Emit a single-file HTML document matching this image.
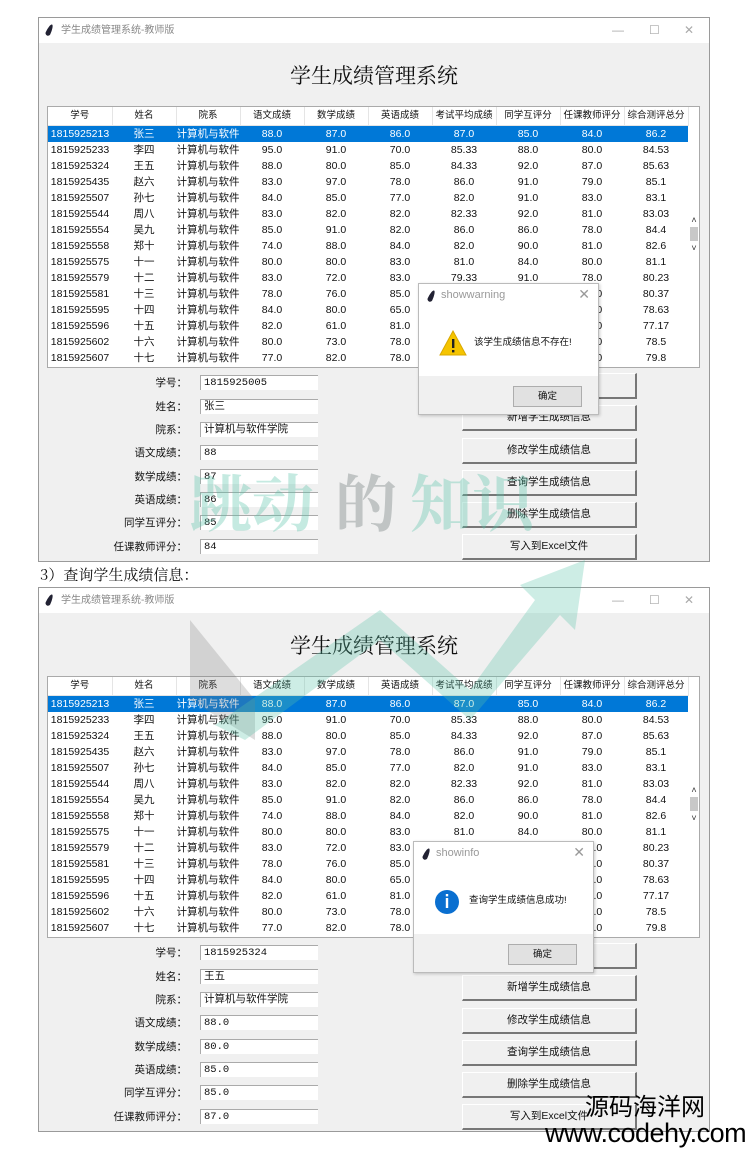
<!DOCTYPE html>
<html><head><meta charset="utf-8">
<style>
*{margin:0;padding:0;box-sizing:border-box}
body{width:750px;height:1152px;background:#fff;position:relative;overflow:hidden;font-family:"Liberation Sans","Noto Sans CJK SC",sans-serif;color:#111}
.win{position:absolute;left:38px;width:672px;height:545px;background:#f0f0f0;border:1px solid #9a9a9a}
.tb{position:absolute;left:0;top:0;width:100%;height:25px;background:#fff;font-size:10px;color:#888;line-height:25px;padding-left:22px}
.feather{position:absolute;left:8px;top:6px;width:5px;height:12px;background:#223;border-radius:50% 50% 50% 50%/80% 80% 20% 20%;transform:rotate(25deg)}
.ctl{position:absolute;top:0;font-size:12px;color:#aaa;line-height:25px}
.title{position:absolute;left:0;width:100%;top:42px;text-align:center;font-family:"Noto Serif CJK SC","Liberation Serif",serif;font-size:21px;color:#111}
.tbl{position:absolute;left:8px;top:88px;width:653px;height:262px;background:#fff;border:1px solid #aaa;overflow:hidden}
table{border-collapse:collapse;table-layout:fixed;width:640px;font-size:10.5px}
td,th{width:64px;text-align:center;height:16px;padding:0;white-space:nowrap;font-weight:normal;line-height:16px}
th{height:18px;border-right:1px solid #e5e5e5;border-bottom:1px solid #e5e5e5;font-size:9.5px}
tr.sel td{background:#0078d7;color:#fff}
.sb{position:absolute;left:649px;top:196px;width:12px;font-size:9px;color:#333;text-align:center;line-height:12px}
.sb i{display:block;width:8px;height:14px;background:#c8c8c8;margin:1px auto}
.lab{position:absolute;right:522px;font-size:10.5px;width:120px;text-align:right}
.inp{position:absolute;left:161px;width:118px;height:15px;background:#fff;border-top:1px solid #aaa;border-left:1px solid #aaa;font-family:"Liberation Mono","Noto Sans CJK SC",monospace;font-size:10.5px;line-height:14px;padding-left:3px}
.btn{position:absolute;left:423px;width:175px;height:26px;background:#f0f0f0;border-top:1px solid #fff;border-left:1px solid #fff;border-right:2px solid #777;border-bottom:2px solid #777;font-size:10.5px;text-align:center;line-height:23px}
.dlg{position:absolute;width:181px;height:132px;background:#fff;border:1px solid #bbb;box-shadow:1px 1px 3px rgba(0,0,0,.2)}
.dlg .t{position:absolute;left:22px;top:5px;font-size:11px;color:#999}
.dlg .x{position:absolute;right:8px;top:2px;font-size:14px;color:#999}
.dlg .m{position:absolute;left:55px;top:50px;font-size:9.5px}
.dlg .f{position:absolute;left:0;bottom:0;width:100%;height:38px;background:#f0f0f0}
.dlg .ok{position:absolute;left:94px;top:10px;width:69px;height:21px;background:#e1e1e1;border:1px solid #adadad;font-size:9.5px;text-align:center;line-height:19px}
.cap{position:absolute;left:40px;top:564px;font-family:"Noto Serif CJK SC","Liberation Serif",serif;font-size:15px}
.wm{position:absolute;font-family:"Noto Serif CJK SC",serif;font-size:62px;font-weight:bold;color:rgba(90,195,170,.35)}
</style></head><body>

<!-- WINDOW 1 -->
<div class="win" style="top:17px">
<div class="tb"><span class="feather"></span>学生成绩管理系统-教师版</div>
<div class="ctl" style="left:573px">—</div><div class="ctl" style="left:610px">☐</div><div class="ctl" style="left:645px">✕</div>
<div class="title">学生成绩管理系统</div>
<div class="tbl"><table>
<tr><th>学号</th><th>姓名</th><th>院系</th><th>语文成绩</th><th>数学成绩</th><th>英语成绩</th><th>考试平均成绩</th><th>同学互评分</th><th>任课教师评分</th><th>综合测评总分</th></tr>
<tr class="sel"><td>1815925213</td><td>张三</td><td>计算机与软件</td><td>88.0</td><td>87.0</td><td>86.0</td><td>87.0</td><td>85.0</td><td>84.0</td><td>86.2</td></tr>
<tr><td>1815925233</td><td>李四</td><td>计算机与软件</td><td>95.0</td><td>91.0</td><td>70.0</td><td>85.33</td><td>88.0</td><td>80.0</td><td>84.53</td></tr>
<tr><td>1815925324</td><td>王五</td><td>计算机与软件</td><td>88.0</td><td>80.0</td><td>85.0</td><td>84.33</td><td>92.0</td><td>87.0</td><td>85.63</td></tr>
<tr><td>1815925435</td><td>赵六</td><td>计算机与软件</td><td>83.0</td><td>97.0</td><td>78.0</td><td>86.0</td><td>91.0</td><td>79.0</td><td>85.1</td></tr>
<tr><td>1815925507</td><td>孙七</td><td>计算机与软件</td><td>84.0</td><td>85.0</td><td>77.0</td><td>82.0</td><td>91.0</td><td>83.0</td><td>83.1</td></tr>
<tr><td>1815925544</td><td>周八</td><td>计算机与软件</td><td>83.0</td><td>82.0</td><td>82.0</td><td>82.33</td><td>92.0</td><td>81.0</td><td>83.03</td></tr>
<tr><td>1815925554</td><td>吴九</td><td>计算机与软件</td><td>85.0</td><td>91.0</td><td>82.0</td><td>86.0</td><td>86.0</td><td>78.0</td><td>84.4</td></tr>
<tr><td>1815925558</td><td>郑十</td><td>计算机与软件</td><td>74.0</td><td>88.0</td><td>84.0</td><td>82.0</td><td>90.0</td><td>81.0</td><td>82.6</td></tr>
<tr><td>1815925575</td><td>十一</td><td>计算机与软件</td><td>80.0</td><td>80.0</td><td>83.0</td><td>81.0</td><td>84.0</td><td>80.0</td><td>81.1</td></tr>
<tr><td>1815925579</td><td>十二</td><td>计算机与软件</td><td>83.0</td><td>72.0</td><td>83.0</td><td>79.33</td><td>91.0</td><td>78.0</td><td>80.23</td></tr>
<tr><td>1815925581</td><td>十三</td><td>计算机与软件</td><td>78.0</td><td>76.0</td><td>85.0</td><td>79.67</td><td>88.0</td><td>80.0</td><td>80.37</td></tr>
<tr><td>1815925595</td><td>十四</td><td>计算机与软件</td><td>84.0</td><td>80.0</td><td>65.0</td><td>76.33</td><td>85.0</td><td>80.0</td><td>78.63</td></tr>
<tr><td>1815925596</td><td>十五</td><td>计算机与软件</td><td>82.0</td><td>61.0</td><td>81.0</td><td>74.67</td><td>85.0</td><td>80.0</td><td>77.17</td></tr>
<tr><td>1815925602</td><td>十六</td><td>计算机与软件</td><td>80.0</td><td>73.0</td><td>78.0</td><td>77.0</td><td>83.0</td><td>80.0</td><td>78.5</td></tr>
<tr><td>1815925607</td><td>十七</td><td>计算机与软件</td><td>77.0</td><td>82.0</td><td>78.0</td><td>79.0</td><td>82.0</td><td>80.0</td><td>79.8</td></tr>
</table></div>
<div class="sb">˄<i></i>˅</div>
<div class="lab" style="top:357px">学号：</div><div class="inp" style="top:357px">1815925005</div>
<div class="lab" style="top:381px">姓名：</div><div class="inp" style="top:381px">张三</div>
<div class="lab" style="top:404px">院系：</div><div class="inp" style="top:404px">计算机与软件学院</div>
<div class="lab" style="top:427px">语文成绩：</div><div class="inp" style="top:427px">88</div>
<div class="lab" style="top:451px">数学成绩：</div><div class="inp" style="top:451px">87</div>
<div class="lab" style="top:474px">英语成绩：</div><div class="inp" style="top:474px">86</div>
<div class="lab" style="top:497px">同学互评分：</div><div class="inp" style="top:497px">85</div>
<div class="lab" style="top:521px">任课教师评分：</div><div class="inp" style="top:521px">84</div>
<div class="btn" style="top:355px"></div>
<div class="btn" style="top:387px">新增学生成绩信息</div>
<div class="btn" style="top:420px">修改学生成绩信息</div>
<div class="btn" style="top:452px">查询学生成绩信息</div>
<div class="btn" style="top:484px">删除学生成绩信息</div>
<div class="btn" style="top:516px">写入到Excel文件</div>
</div>

<div class="dlg" style="left:418px;top:283px">
<span class="feather" style="position:absolute;left:10px;top:6px"></span>
<div class="t">showwarning</div><div class="x">✕</div>
<svg style="position:absolute;left:20px;top:46px" width="28" height="26"><polygon points="14,1 27,25 1,25" fill="#f5c400" stroke="#d9a800"/><rect x="13" y="9" width="2.4" height="9" fill="#222"/><rect x="13" y="20" width="2.4" height="2.4" fill="#222"/></svg>
<div class="m">该学生成绩信息不存在!</div>
<div class="f"><div class="ok">确定</div></div>
</div>

<div class="cap">3）查询学生成绩信息：</div>

<!-- WINDOW 2 -->
<div class="win" style="top:587px">
<div class="tb"><span class="feather"></span>学生成绩管理系统-教师版</div>
<div class="ctl" style="left:573px">—</div><div class="ctl" style="left:610px">☐</div><div class="ctl" style="left:645px">✕</div>
<div class="title">学生成绩管理系统</div>
<div class="tbl"><table>
<tr><th>学号</th><th>姓名</th><th>院系</th><th>语文成绩</th><th>数学成绩</th><th>英语成绩</th><th>考试平均成绩</th><th>同学互评分</th><th>任课教师评分</th><th>综合测评总分</th></tr>
<tr class="sel"><td>1815925213</td><td>张三</td><td>计算机与软件</td><td>88.0</td><td>87.0</td><td>86.0</td><td>87.0</td><td>85.0</td><td>84.0</td><td>86.2</td></tr>
<tr><td>1815925233</td><td>李四</td><td>计算机与软件</td><td>95.0</td><td>91.0</td><td>70.0</td><td>85.33</td><td>88.0</td><td>80.0</td><td>84.53</td></tr>
<tr><td>1815925324</td><td>王五</td><td>计算机与软件</td><td>88.0</td><td>80.0</td><td>85.0</td><td>84.33</td><td>92.0</td><td>87.0</td><td>85.63</td></tr>
<tr><td>1815925435</td><td>赵六</td><td>计算机与软件</td><td>83.0</td><td>97.0</td><td>78.0</td><td>86.0</td><td>91.0</td><td>79.0</td><td>85.1</td></tr>
<tr><td>1815925507</td><td>孙七</td><td>计算机与软件</td><td>84.0</td><td>85.0</td><td>77.0</td><td>82.0</td><td>91.0</td><td>83.0</td><td>83.1</td></tr>
<tr><td>1815925544</td><td>周八</td><td>计算机与软件</td><td>83.0</td><td>82.0</td><td>82.0</td><td>82.33</td><td>92.0</td><td>81.0</td><td>83.03</td></tr>
<tr><td>1815925554</td><td>吴九</td><td>计算机与软件</td><td>85.0</td><td>91.0</td><td>82.0</td><td>86.0</td><td>86.0</td><td>78.0</td><td>84.4</td></tr>
<tr><td>1815925558</td><td>郑十</td><td>计算机与软件</td><td>74.0</td><td>88.0</td><td>84.0</td><td>82.0</td><td>90.0</td><td>81.0</td><td>82.6</td></tr>
<tr><td>1815925575</td><td>十一</td><td>计算机与软件</td><td>80.0</td><td>80.0</td><td>83.0</td><td>81.0</td><td>84.0</td><td>80.0</td><td>81.1</td></tr>
<tr><td>1815925579</td><td>十二</td><td>计算机与软件</td><td>83.0</td><td>72.0</td><td>83.0</td><td>79.33</td><td>91.0</td><td>78.0</td><td>80.23</td></tr>
<tr><td>1815925581</td><td>十三</td><td>计算机与软件</td><td>78.0</td><td>76.0</td><td>85.0</td><td>79.67</td><td>88.0</td><td>80.0</td><td>80.37</td></tr>
<tr><td>1815925595</td><td>十四</td><td>计算机与软件</td><td>84.0</td><td>80.0</td><td>65.0</td><td>76.33</td><td>85.0</td><td>80.0</td><td>78.63</td></tr>
<tr><td>1815925596</td><td>十五</td><td>计算机与软件</td><td>82.0</td><td>61.0</td><td>81.0</td><td>74.67</td><td>85.0</td><td>80.0</td><td>77.17</td></tr>
<tr><td>1815925602</td><td>十六</td><td>计算机与软件</td><td>80.0</td><td>73.0</td><td>78.0</td><td>77.0</td><td>83.0</td><td>80.0</td><td>78.5</td></tr>
<tr><td>1815925607</td><td>十七</td><td>计算机与软件</td><td>77.0</td><td>82.0</td><td>78.0</td><td>79.0</td><td>82.0</td><td>80.0</td><td>79.8</td></tr>
</table></div>
<div class="sb">˄<i></i>˅</div>
<div class="lab" style="top:357px">学号：</div><div class="inp" style="top:357px">1815925324</div>
<div class="lab" style="top:381px">姓名：</div><div class="inp" style="top:381px">王五</div>
<div class="lab" style="top:404px">院系：</div><div class="inp" style="top:404px">计算机与软件学院</div>
<div class="lab" style="top:427px">语文成绩：</div><div class="inp" style="top:427px">88.0</div>
<div class="lab" style="top:451px">数学成绩：</div><div class="inp" style="top:451px">80.0</div>
<div class="lab" style="top:474px">英语成绩：</div><div class="inp" style="top:474px">85.0</div>
<div class="lab" style="top:497px">同学互评分：</div><div class="inp" style="top:497px">85.0</div>
<div class="lab" style="top:521px">任课教师评分：</div><div class="inp" style="top:521px">87.0</div>
<div class="btn" style="top:355px"></div>
<div class="btn" style="top:387px">新增学生成绩信息</div>
<div class="btn" style="top:420px">修改学生成绩信息</div>
<div class="btn" style="top:452px">查询学生成绩信息</div>
<div class="btn" style="top:484px">删除学生成绩信息</div>
<div class="btn" style="top:516px">写入到Excel文件</div>
</div>

<div class="dlg" style="left:413px;top:841px">
<span class="feather" style="position:absolute;left:10px;top:6px"></span>
<div class="t">showinfo</div><div class="x">✕</div>
<svg style="position:absolute;left:20px;top:47px" width="26" height="26"><circle cx="13" cy="13" r="12" fill="#0a6fd0"/><rect x="11.8" y="9" width="2.4" height="10" fill="#fff"/><rect x="11.8" y="5" width="2.4" height="2.4" fill="#fff"/></svg>
<div class="m">查询学生成绩信息成功!</div>
<div class="f"><div class="ok">确定</div></div>
</div>

<!-- watermark -->
<svg style="position:absolute;left:0;top:0" width="750" height="1152">
<polygon points="190,620 255,700 255,740 190,700" fill="rgba(120,120,120,.25)"/>
<polygon points="215,725 380,610 470,690 535,600 520,585 585,560 575,630 560,615 470,720 380,640 245,740" fill="rgba(90,195,170,.3)"/>
</svg>
<div class="wm" style="left:190px;top:455px">跳动</div>
<div class="wm" style="left:335px;top:455px;color:rgba(120,130,130,.4)">的</div>
<div class="wm" style="left:410px;top:455px">知识</div>

<div style="position:absolute;left:585px;top:1093px;font-size:24px;line-height:30px;color:#000">源码海洋网</div>
<div style="position:absolute;left:545px;top:1118px;font-size:27px;line-height:30px;color:#000;letter-spacing:-0.5px">www.codehy.com</div>
</body></html>
